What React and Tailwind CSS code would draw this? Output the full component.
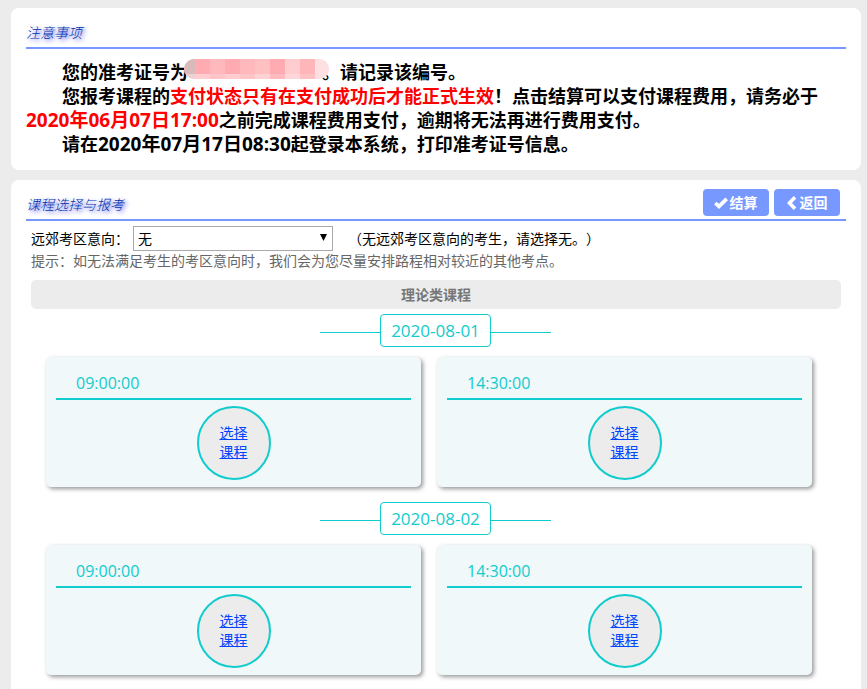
import React from 'react';

const days = [
    { date: '2020-08-01', times: ['09:00:00', '14:30:00'] },
    { date: '2020-08-02', times: ['09:00:00', '14:30:00'] },
];

const maskColors = ['#ffabb1', '#ffb9bd', '#ffabb1', '#ffb9bd', '#ffc0c2', '#ffabb1', '#ffcdd0', '#ffb6b9'];

const PanelTitle = ({ children }) => (
    <h2 className="text-sm leading-5 italic font-light text-[#0033aa] [text-shadow:2px_2px_4px_#5555ee]">
        {children}
    </h2>
);

// hidden admission number
const MaskedNumber = () => (
    <span className="relative inline-block h-4 w-[134px]">
        <svg className="absolute -left-1 -top-1" width="145" height="20" viewBox="0 0 145 20" aria-hidden="true">
            <defs>
                <clipPath id="mask">
                    <rect width="145" height="20" rx="10" />
                </clipPath>
            </defs>
            <g clipPath="url(#mask)" shapeRendering="crispEdges">
                <rect width="145" height="20" fill="#ffdcde" />
                <rect width="11" height="15" fill="#d9babb" />
                <rect y="15" width="11" height="5" fill="#ecd0d2" />
                {maskColors.map((color, i) => (
                    <g key={i} fill={color}>
                        <rect x={11 + i * 15} width="15" height="15" />
                        <rect x={11 + i * 15} y="15" width="15" height="5" opacity={i % 2 ? 0.7 : 0.3} />
                    </g>
                ))}
                <rect x="131" width="14" height="20" fill="#ffe0e2" />
            </g>
        </svg>
    </span>
);

const Digits = ({ className = '', children }) => (
    <span className={`font-['Open_Sans','Noto_Sans_CJK_SC',sans-serif] text-[19px] leading-4 ${className}`}>
        {children}
    </span>
);

const ActionButton = ({ icon, children }) => (
    <button type="button" className="flex h-[27px] w-[66px] items-center justify-center gap-0.5 rounded bg-[#7799ff] pr-px text-sm font-bold text-white">
        {icon}
        <span className="pb-0.5">{children}</span>
    </button>
);

const SessionCard = ({ time }) => (
    <div className="rounded-[5px] bg-[#f0f8fa] px-2.5 pb-[7px] pt-[13px] shadow-[2px_2px_4px_#999999]">
        <div className="border-b-2 border-[#11cccc] pb-0.5 pl-5 font-['Open_Sans'] text-base leading-[26px] text-[#11cccc]">
            {time}
        </div>
        <div className="mx-auto mt-1.5 flex size-[74px] items-center justify-center rounded-full border-2 border-[#11cccc] bg-[#ececec] pb-0.5">
            <a href="#" className="w-7 text-sm leading-[19px] text-[#0044ff] underline">选择课程</a>
        </div>
    </div>
);

const ExamDay = ({ date, times }) => (
    <section className="mb-[15px]">
        <div className="flex items-center justify-center pr-px">
            <span className="mt-1 h-px w-[60px] bg-[#11cccc]" />
            <h4 className="w-[111px] rounded border border-[#11cccc] text-center font-['Open_Sans'] text-[17px] leading-[31px] text-[#11cccc]">
                {date}
            </h4>
            <span className="mt-1 h-px w-[60px] bg-[#11cccc]" />
        </div>
        <div className="mt-2.5 grid grid-cols-2 gap-4 pl-[15px] pr-[29px]">
            {times.map((time) => (
                <SessionCard key={time} time={time} />
            ))}
        </div>
    </section>
);

const CheckIcon = () => (
    <svg width="14" height="12" viewBox="0 0 14 12" fill="none" stroke="currentColor" strokeWidth="3.6" aria-hidden="true">
        <path d="M1.3 6 5 9.4 12.7 1.9" />
    </svg>
);

const BackIcon = () => (
    <svg width="12" height="14" viewBox="0 0 12 14" fill="none" stroke="currentColor" strokeWidth="3.6" aria-hidden="true">
        <path d="M9 1.3 3.5 7 9 12.7" />
    </svg>
);

export default function App() {
    return (
        <div className="flex min-h-screen flex-col gap-2.5 bg-[#ececec] pl-[11px] pr-1.5 pt-2 font-['Noto_Sans_CJK_SC',sans-serif] text-black [text-spacing-trim:space-all]">
            <section className="rounded-lg bg-white px-[15px] pb-[15px] pt-3.5">
                <div className="border-b-2 border-[#7799ff] pb-[5px]">
                    <PanelTitle>注意事项</PanelTitle>
                </div>
                <div className="pt-2.5 text-lg leading-6 font-bold">
                    <p className="indent-9">
                        您的准考证号为<MaskedNumber />。请记录该编号。
                    </p>
                    <p className="indent-9">
                        您报考课程的<span className="text-[#ff0000]">支付状态只有在支付成功后才能正式生效</span>！点击结算可以支付课程费用，请务必于
                        <Digits className="text-[#ff0000]">2020年06月07日17:00</Digits>
                        之前完成课程费用支付，逾期将无法再进行费用支付。
                    </p>
                    <p className="indent-9">
                        请在<Digits>2020年07月17日08:30</Digits>起登录本系统，打印准考证号信息。
                    </p>
                </div>
            </section>

            <section className="flex-1 rounded-t-lg bg-white px-[15px] pt-[9px]">
                <div className="flex items-center justify-between border-b-2 border-[#7799ff] pb-[3px] pr-1.5">
                    <div className="pt-0.5">
                        <PanelTitle>课程选择与报考</PanelTitle>
                    </div>
                    <div className="flex gap-[5px]">
                        <ActionButton icon={<CheckIcon />}>结算</ActionButton>
                        <ActionButton icon={<BackIcon />}>返回</ActionButton>
                    </div>
                </div>

                <div className="px-[5px] pt-[5px]">
                    <div className="flex items-center text-sm">
                        <label htmlFor="area" className="w-[102px] pb-0.5">远郊考区意向：</label>
                        <div className="relative">
                            <select id="area" className="block h-[25px] w-[200px] appearance-none border border-[#a9a9a9] bg-white pb-0.5 pl-1 text-sm leading-5">
                                <option>无</option>
                            </select>
                            <svg className="pointer-events-none absolute right-1.5 top-2" width="7" height="7" viewBox="0 0 7 7" aria-hidden="true">
                                <path d="M0 0h7L3.5 7z" />
                            </svg>
                        </div>
                        <span className="ml-[15px] pb-0.5">（无远郊考区意向的考生，请选择无。）</span>
                    </div>
                    <p className="text-sm leading-[18px] text-[#666666]">
                        提示：如无法满足考生的考区意向时，我们会为您尽量安排路程相对较近的其他考点。
                    </p>
                    <h3 className="mb-[5px] mt-[11px] rounded-[5px] bg-[#ececec] text-center text-sm leading-[29px] font-bold text-[#777777]">
                        理论类课程
                    </h3>
                    {days.map((day) => (
                        <ExamDay key={day.date} {...day} />
                    ))}
                </div>
            </section>
        </div>
    );
}
